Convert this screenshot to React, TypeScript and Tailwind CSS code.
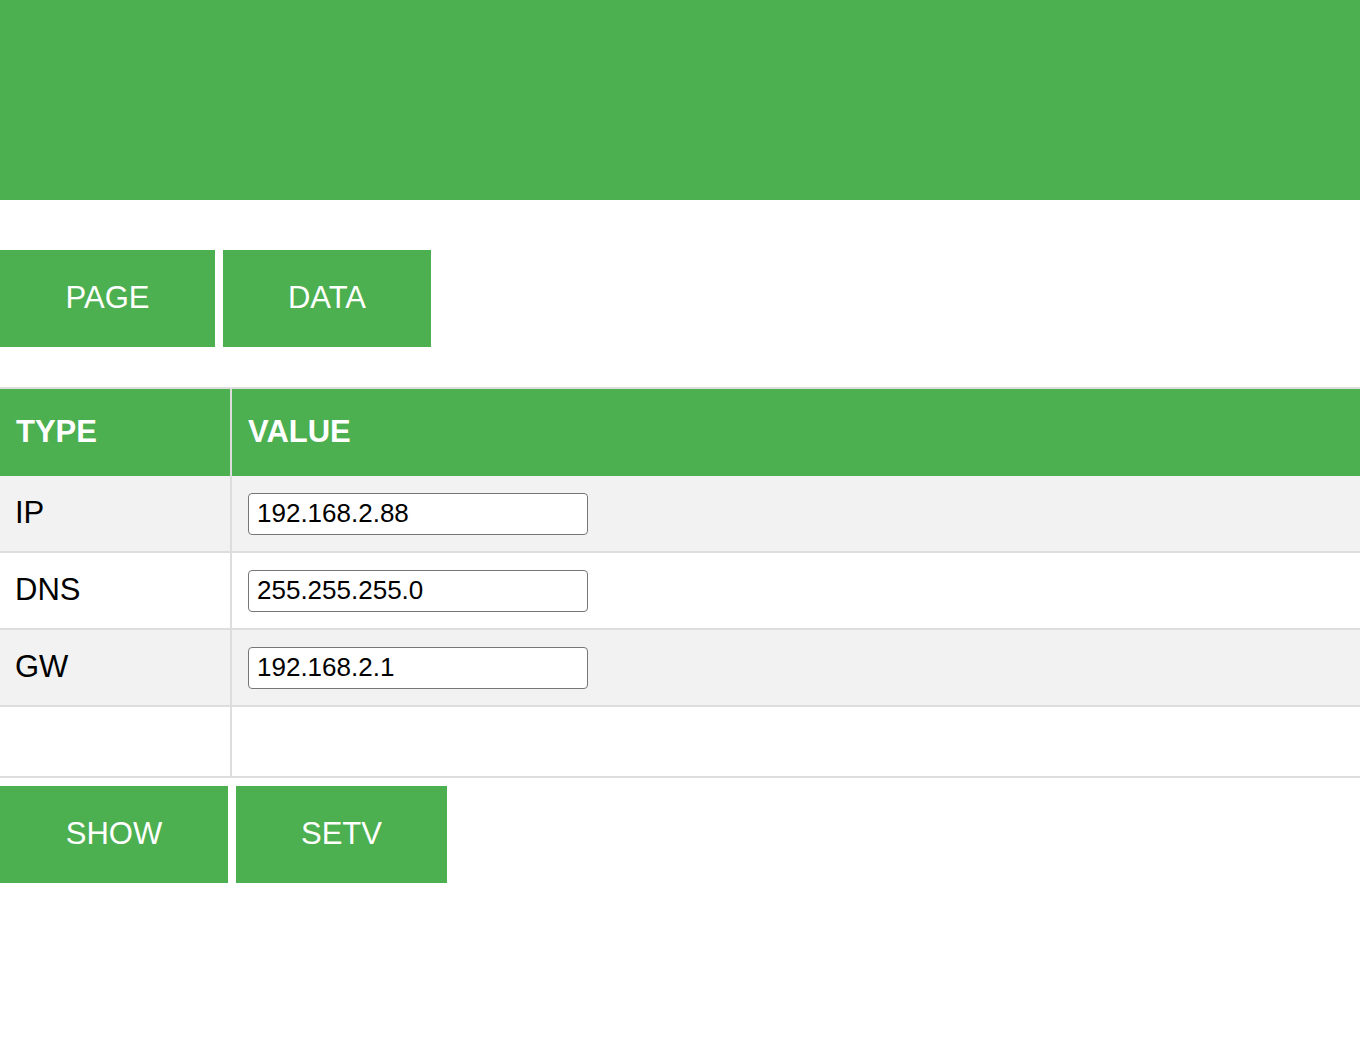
const rows = [
  { type: "IP", value: "192.168.2.88", shade: true },
  { type: "DNS", value: "255.255.255.0", shade: false },
  { type: "GW", value: "192.168.2.1", shade: true },
]

function GreenButton({ label, width }: { label: string; width: string }) {
  return (
    <button
      className={`flex h-[97px] items-center justify-center bg-[#4caf50] text-[31px] text-white ${width}`}
    >
      {label}
    </button>
  )
}

function App() {
  return (
    <div className="min-h-screen bg-white font-['Liberation_Sans',Arial,sans-serif] text-black">
      <header className="h-[200px] bg-[#4caf50]" />

      <div className="mt-[50px] flex gap-2">
        <GreenButton label="PAGE" width="w-[215px]" />
        <GreenButton label="DATA" width="w-[208px]" />
      </div>

      <div className="mt-[40px] border-t-2 border-[#dddddd]">
        <div className="grid h-[87px] grid-cols-[232px_1fr] bg-[#4caf50] text-[31px] font-bold text-white">
          <div className="flex items-center border-r-2 border-[#dddddd] pl-4">TYPE</div>
          <div className="flex items-center pl-4">VALUE</div>
        </div>
        {rows.map((r) => (
          <div
            key={r.type}
            className={`grid h-[77px] grid-cols-[232px_1fr] border-b-2 border-[#dddddd] ${
              r.shade ? "bg-[#f2f2f2]" : "bg-white"
            }`}
          >
            <div className="flex items-center border-r-2 border-[#dddddd] pl-[15px] text-[31px]">
              {r.type}
            </div>
            <div className="flex items-center pl-4">
              <input
                defaultValue={r.value}
                className="h-[42px] w-[340px] rounded-[4px] border border-[#767676] bg-white px-2 text-[26px] outline-none"
              />
            </div>
          </div>
        ))}
        <div className="grid h-[71px] grid-cols-[232px_1fr] border-b-2 border-[#dddddd]">
          <div className="border-r-2 border-[#dddddd]" />
          <div />
        </div>
      </div>

      <div className="mt-2 flex gap-2">
        <GreenButton label="SHOW" width="w-[228px]" />
        <GreenButton label="SETV" width="w-[211px]" />
      </div>
    </div>
  )
}

export default App
